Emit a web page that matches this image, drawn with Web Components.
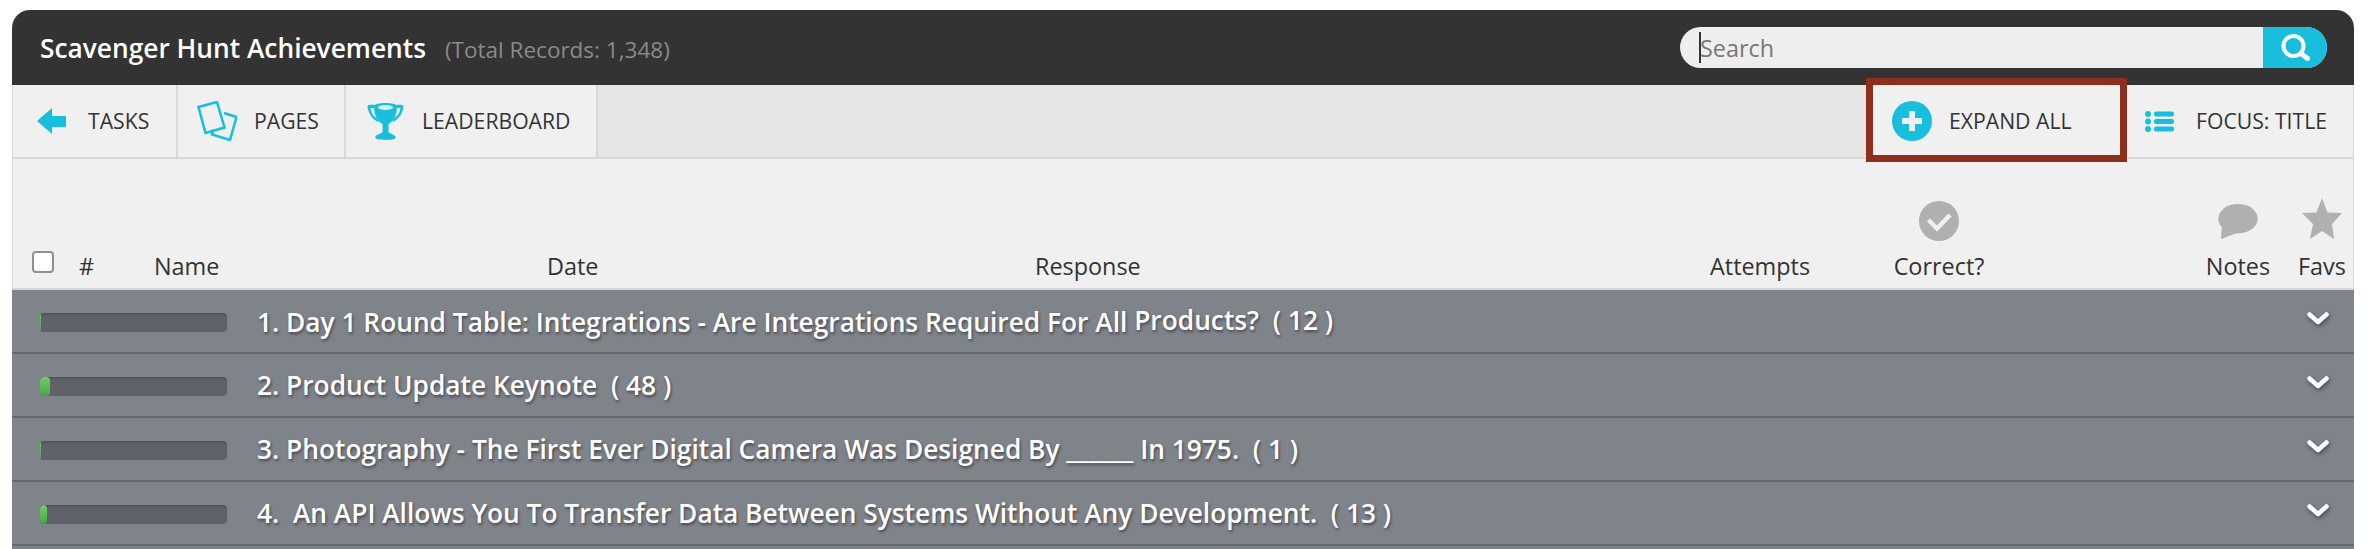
<!DOCTYPE html>
<html>
<head>
<meta charset="utf-8">
<style>
  html, body { margin: 0; height: 549px; overflow: hidden; background: #fff; }
  body { padding: 10px 14px 0 12px; box-sizing: border-box; font-family: "Open Sans", sans-serif; }
</style>
</head>
<body>
<hunt-header heading="Scavenger Hunt Achievements" total="(Total Records: 1,348)"></hunt-header>
<hunt-toolbar>
  <tool-tab slot="left" width="165" gap="22" pad="24" label="TASKS">
    <svg slot="icon" width="29" height="26" viewBox="0 0 29 26"><path d="M0 13 15 0v8h14v11H15v7z" fill="#17bfdd"/></svg>
  </tool-tab>
  <tool-tab slot="left" width="168" gap="17" pad="19" label="PAGES">
    <svg slot="icon" width="40" height="40" viewBox="0 0 40 40" fill="none" stroke="#17bfdd" stroke-width="2.6"><path d="M1.500 6 20 1l7.500 25.500-19 5.500z"/><path d="M27 12l12.500 4-6.500 23-18-5.500 1.500-5"/></svg>
  </tool-tab>
  <tool-tab slot="left" width="252" gap="18" pad="21" label="LEADERBOARD">
    <svg slot="icon" width="37" height="37" viewBox="0 0 37 37"><path d="M8 2C3 1.500 1 2 .5 3c0 6 5 14 11 16l-1-3C6 13 4 9 3.500 5H8zM29 2c5-.5 7 0 7.500 1 0 6-5 14-11 16l1-3c4.500-3 6.500-7 7-11h-4.500z" fill="#17bfdd"/><path d="M7 3c0-4 23-4 23 0 0 9-3 15-8.500 18v8c0 1 6 2.500 7 4.500 1 2-1 3.500-10 3.500s-11-1.500-10-3.500c1-2 7-3.500 7-4.500v-8C10 18 7 12 7 3z" fill="#17bfdd"/><ellipse cx="18.500" cy="4.500" rx="7.500" ry="2.500" fill="#d5f1f6"/></svg>
  </tool-tab>
  <tool-tab slot="right" width="259" gap="17" pad="24" label="EXPAND ALL" marked>
    <svg slot="icon" width="40" height="40" viewBox="0 0 40 40"><circle cx="20" cy="20" r="20" fill="#17bfdd"/><path d="M17 10h6v7h7v6h-7v7h-6v-7h-7v-6h7z" fill="#f0f0f0"/></svg>
  </tool-tab>
  <tool-tab slot="right" width="226" gap="22" pad="18" label="FOCUS: TITLE">
    <svg slot="icon" width="29" height="21" viewBox="0 0 29 21" fill="#17bfdd"><circle cx="3" cy="3" r="3"/><circle cx="3" cy="10.500" r="3"/><circle cx="3" cy="18" r="3"/><rect x="9" y=".5" width="20" height="5" rx="2"/><rect x="9" y="8" width="20" height="5" rx="2"/><rect x="9" y="15.500" width="20" height="5" rx="2"/></svg>
  </tool-tab>
</hunt-toolbar>
<hunt-columns></hunt-columns>
<hunt-row percent="0.8">1. Day 1 Round Table: Integrations - Are Integrations Required For All <span style="vertical-align:2px">Products?&nbsp; ( 12 )</span></hunt-row>
<hunt-row percent="5.5">2. Product Update Keynote&nbsp; ( 48 )</hunt-row>
<hunt-row percent="0.8">3. Photography - The First Ever Digital Camera Was Designed By ______ In 1975.&nbsp; ( 1 )</hunt-row>
<hunt-row percent="4">4.&nbsp; An API Allows You To Transfer Data Between Systems Without Any Development.&nbsp; ( 13 )</hunt-row>
<hunt-row style="height:3px;border:0"></hunt-row>
<script>
class HuntHeader extends HTMLElement {
  connectedCallback() {
    this.attachShadow({ mode: 'open' });
    this.shadowRoot.innerHTML = `
      <style>
        :host { display: flex; align-items: center; justify-content: space-between; height: 75px; box-sizing: border-box;
          padding: 0 27px 0 28px; background: #333; border-radius: 18px 18px 0 0; }
        .title { font-size: 26.300px; font-weight: 600; color: #fff; }
        .total { font-size: 22.500px; color: #8a8a8a; margin-left: 19px; }
        .search { display: flex; width: 647px; height: 41px; border-radius: 21px; overflow: hidden; background: #eee; }
        .field { flex: 1; display: flex; align-items: center; padding-left: 19px; font-size: 23.400px; color: #777; }
        .caret { width: 2px; height: 31px; background: #333; margin-right: -1px; }
        .go { width: 64px; background: #17bfdd; display: flex; align-items: center; justify-content: center; }
      </style>
      <div><span class="title">${this.getAttribute('heading')}</span><span class="total">${this.getAttribute('total')}</span></div>
      <div class="search">
        <div class="field"><i class="caret"></i>Search</div>
        <div class="go">
          <svg width="29" height="27" viewBox="0 0 29 27" fill="none" stroke="#fff"><circle cx="12.500" cy="12" r="10" stroke-width="4"/><path d="M20 19.500l6.500 5" stroke-width="5" stroke-linecap="round"/></svg>
        </div>
      </div>`;
  }
}

class HuntToolbar extends HTMLElement {
  connectedCallback() {
    this.attachShadow({ mode: 'open' });
    this.shadowRoot.innerHTML = `
      <style>
        :host { display: flex; justify-content: space-between; height: 74px; box-sizing: border-box;
          background: #e5e5e5; border: 1px solid #d8d8d8; border-width: 0 1px 2px 1px; }
        .side { display: flex; }
      </style>
      <div class="side"><slot name="left"></slot></div>
      <div class="side"><slot name="right"></slot></div>`;
  }
}

class ToolTab extends HTMLElement {
  connectedCallback() {
    const divided = this.slot === 'left';
    this.attachShadow({ mode: 'open' });
    this.shadowRoot.innerHTML = `
      <style>
        :host { display: flex; align-items: center; position: relative; box-sizing: border-box; background: #f0f0f0;
          width: ${this.getAttribute('width')}px; padding-left: ${this.getAttribute('pad')}px; gap: ${this.getAttribute('gap')}px;
          ${divided ? 'border-right: 2px solid #d8d8d8;' : ''}
          font-size: 21.200px; font-weight: 400; color: #333; white-space: nowrap; }
        ::slotted(svg) { flex: none; }
        span { margin-top: -2px; }
        .mark { position: absolute; left: -2px; right: 0; top: -7px; bottom: -5px; border: 7px solid #8e2f1e; pointer-events: none; }
      </style>
      <slot name="icon"></slot><span>${this.getAttribute('label')}</span>
      ${this.hasAttribute('marked') ? '<div class="mark"></div>' : ''}`;
  }
}

class HuntColumns extends HTMLElement {
  connectedCallback() {
    this.attachShadow({ mode: 'open' });
    this.shadowRoot.innerHTML = `
      <style>
        :host { display: grid; height: 131px; box-sizing: border-box; padding: 0 0 8px 19px; background: #f0f0f0;
          border: 1px solid #d8d8d8; border-width: 0 1px 2px 1px;
          grid-template-columns: 47px 75px 393px 488px 675px 179px 100px 209px 80px 14px 60px; align-items: end;
          font-size: 23.400px; line-height: 27px; color: #333; }
        .col { display: flex; flex-direction: column; align-items: center; gap: 12px; white-space: nowrap; }
        .icon-low { gap: 14px; }
        .check { width: 22px; height: 22px; margin-bottom: 7px; box-sizing: border-box; background: #fff; border: 2px solid #8f8f8f; border-radius: 4px; }
      </style>
      <div class="check"></div>
      <div>#</div>
      <div>Name</div>
      <div>Date</div>
      <div>Response</div>
      <div>Attempts</div>
      <div class="col">
        <svg width="40" height="40" viewBox="0 0 40 40"><circle cx="20" cy="20" r="20" fill="#b1afaf"/><path d="M9.500 19l8.500 8.500L31 14" fill="none" stroke="#f0f0f0" stroke-width="4.500"/></svg>
        Correct?
      </div>
      <div></div>
      <div class="col icon-low">
        <svg width="40" height="35" viewBox="0 0 40 35"><ellipse cx="20" cy="14.700" rx="19.700" ry="14.700" fill="#b1afaf"/><path d="M4 20 3 35l16-6z" fill="#b1afaf"/></svg>
        Notes
      </div>
      <div></div>
      <div class="col icon-low">
        <svg width="40" height="41" viewBox="0 0 40 41"><path d="M20 0l5.500 14.500L40 15 30 26l2 15-12-8-12 8 3-15L0 15l14.500-.5z" fill="#b1afaf"/></svg>
        Favs
      </div>`;
  }
}

class HuntRow extends HTMLElement {
  connectedCallback() {
    const percent = this.getAttribute('percent');
    this.attachShadow({ mode: 'open' });
    this.shadowRoot.innerHTML = `
      <style>
        :host { display: flex; align-items: center; height: 64px; box-sizing: border-box; padding: 0 25px 0 28px;
          background: #7f838a; border-bottom: 2px solid #5f6a70; color: #fff; font-size: 26.300px; font-weight: 600;
          text-shadow: 1px 2px 3px rgba(0,0,0,.45); }
        .bar { flex: none; width: 187px; height: 19px; margin: 2px 30px 0 0; border-radius: 4px; background: #5f6268; overflow: hidden;
          box-shadow: inset 0 2px 2px rgba(0,0,0,.15); }
        .fill { height: 100%; width: ${percent}%; background: linear-gradient(#73cc6c, #46a546); border-radius: 4px; }
        .text { flex: 1; white-space: nowrap; }
        svg { margin-top: -6px; filter: drop-shadow(1px 2px 2px rgba(0,0,0,.45)); }
      </style>
      ${percent === null ? '' : `
      <div class="bar"><div class="fill"></div></div>
      <div class="text"><slot></slot></div>
      <svg width="22" height="13" viewBox="0 0 22 13" fill="none" stroke="#fff" stroke-width="4.500" stroke-linecap="round" stroke-linejoin="round"><path d="M2.500 2.500 11 10l8.500-7.500"/></svg>`}`;
  }
}

customElements.define('hunt-header', HuntHeader);
customElements.define('hunt-toolbar', HuntToolbar);
customElements.define('tool-tab', ToolTab);
customElements.define('hunt-columns', HuntColumns);
customElements.define('hunt-row', HuntRow);
</script>
</body>
</html>
